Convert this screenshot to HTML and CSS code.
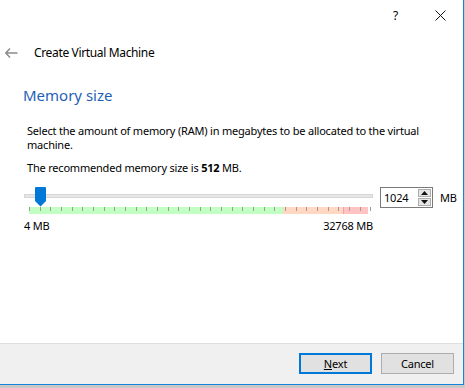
FILE: index.html
```html
<!DOCTYPE html>
<html>
<head>
<meta charset="utf-8">
<link rel="stylesheet" href="styles.css">
</head>
<body>
<div class="window">
  <div class="titlebar">
    <span class="help">?</span>
    <svg class="close" width="11" height="11" viewBox="0 0 11 11"><path d="M0.5 0.5 L10.5 10.5 M10.5 0.5 L0.5 10.5" stroke="#111" stroke-width="1" fill="none"/></svg>
  </div>
  <div class="header">
    <svg class="back" width="13" height="10" viewBox="0 0 13 10"><path d="M5 0.5 L0.8 5 L5 9.5 M0.8 5 H12.5" stroke="#8a8a8a" stroke-width="1.4" fill="none"/></svg>
    <span class="header-title">Create Virtual Machine</span>
  </div>
  <div class="content">
    <h1 class="heading">Memory size</h1>
    <p class="desc">Select the amount of memory (RAM) in megabytes to be allocated to the virtual<br>machine.</p>
    <p class="recommend">The recommended memory size is <b>512</b> MB.</p>
    <div class="memrow">
      <div class="slider">
        <div class="groove"></div>
        <svg class="handle" width="12" height="20" viewBox="0 0 12 20"><path d="M0 1 Q0 0 1 0 H10 Q11 0 11 1 V14 L5.5 19.5 L0 14 Z" fill="#0078d7"/></svg>
        <div class="scale">
          <div class="zone green"></div>
          <div class="zone orange"></div>
          <div class="zone red"></div>
          <div class="ticks"></div>
        </div>
        <div class="labels"><span>4 MB</span><span>32768 MB</span></div>
      </div>
      <div class="spin">
        <span class="spin-value">1024</span>
        <div class="spin-btns">
          <div class="spin-btn"><svg width="7" height="4" viewBox="0 0 7 4"><path d="M0 4 L3.5 0 L7 4 Z" fill="#111"/></svg></div>
          <div class="spin-btn"><svg width="7" height="4" viewBox="0 0 7 4"><path d="M0 0 L3.5 4 L7 0 Z" fill="#111"/></svg></div>
        </div>
      </div>
      <span class="unit">MB</span>
    </div>
  </div>
  <div class="footer">
    <button class="btn btn-default"><u>N</u>ext</button>
    <button class="btn">Cancel</button>
  </div>
</div>
</body>
</html>
```

FILE: styles.css
```css
* { box-sizing: border-box; }
html, body { margin: 0; padding: 0; }
body {
  width: 465px;
  height: 388px;
  background: #c9c9c9;
  font-family: "Noto Sans", "DejaVu Sans", sans-serif;
  font-size: 11px;
  letter-spacing: -0.2px;
  color: #000;
  overflow: hidden;
}
.window {
  width: 464px;
  height: 385px;
  background: #fff;
  border-right: 1px solid #1883d7;
  border-bottom: 1px solid #1883d7;
  display: flex;
  flex-direction: column;
}
.titlebar {
  height: 31px;
  display: flex;
  align-items: center;
  justify-content: flex-end;
  padding-right: 17px;
}
.help {
  font-size: 12px;
  margin-right: 37px;
  margin-top: -1px;
}
.close { margin-top: -1px; }
.header {
  height: 42px;
  display: flex;
  align-items: center;
  padding-left: 5px;
}
.back { margin-right: 16px; margin-top: 1px; }
.header-title { font-size: 12px; letter-spacing: -0.35px; }
.content {
  flex: 1;
  padding-left: 23px;
}
.heading {
  margin: 11px 0 0 0;
  font-size: 15px;
  font-weight: normal;
  letter-spacing: 0;
  color: #1f5fb8;
  line-height: 22px;
}
.desc {
  margin: 18px 0 0 4px;
  line-height: 14px;
  white-space: nowrap;
}
.recommend {
  margin: 9px 0 0 4px;
  line-height: 14px;
}
.memrow {
  display: flex;
  align-items: flex-start;
  margin-top: 12px;
  margin-left: 1px;
}
.slider {
  position: relative;
  width: 349px;
  padding-top: 7px;
}
.groove {
  height: 4px;
  background: #e7e7e7;
  border: 1px solid #d6d6d6;
}
.handle {
  position: absolute;
  left: 11px;
  top: 0;
}
.scale {
  position: relative;
  display: flex;
  margin: 9px 0 0 5px;
  width: 339px;
  height: 7px;
}
.zone { height: 7px; }
.green { width: 254px; background: #c2ffc2; }
.orange { width: 61px; background: #ffd7c3; border-right: 1px solid #f4a0a0; }
.red { width: 24px; background: #ffc3c3; }
.ticks {
  position: absolute;
  left: 0;
  top: 0;
  width: 342px;
  height: 4px;
  background: repeating-linear-gradient(to right, #a09a90 0, #a09a90 1px, transparent 1px, transparent 10.6667px);
}
.labels {
  display: flex;
  justify-content: space-between;
  margin-top: 5px;
  line-height: 14px;
}
.spin {
  margin-left: 7px;
  width: 53px;
  height: 21px;
  border: 1px solid #7a7a7a;
  display: flex;
  align-items: center;
  justify-content: space-between;
  padding: 0 1px 0 3px;
}
.spin-btns {
  display: flex;
  flex-direction: column;
  gap: 1px;
}
.spin-btn {
  width: 13px;
  height: 8px;
  background: #e5e5e5;
  border: 1px solid #adadad;
  display: flex;
  align-items: center;
  justify-content: center;
}
.spin-btn svg { display: block; }
.unit {
  margin-left: 7px;
  margin-top: 3px;
}
.footer {
  height: 41px;
  border-top: 1px solid #dfdfdf;
  background: #f0f0f0;
  display: flex;
  justify-content: flex-end;
  align-items: flex-start;
  padding: 9px 9px 0 0;
  gap: 9px;
}
.btn {
  width: 73px;
  height: 21px;
  background: #e1e1e1;
  border: 1px solid #adadad;
  font-family: inherit;
  font-size: 11px;
  letter-spacing: -0.2px;
  padding: 0;
  color: #000;
}
.btn-default { border: 2px solid #0078d7; }
```
